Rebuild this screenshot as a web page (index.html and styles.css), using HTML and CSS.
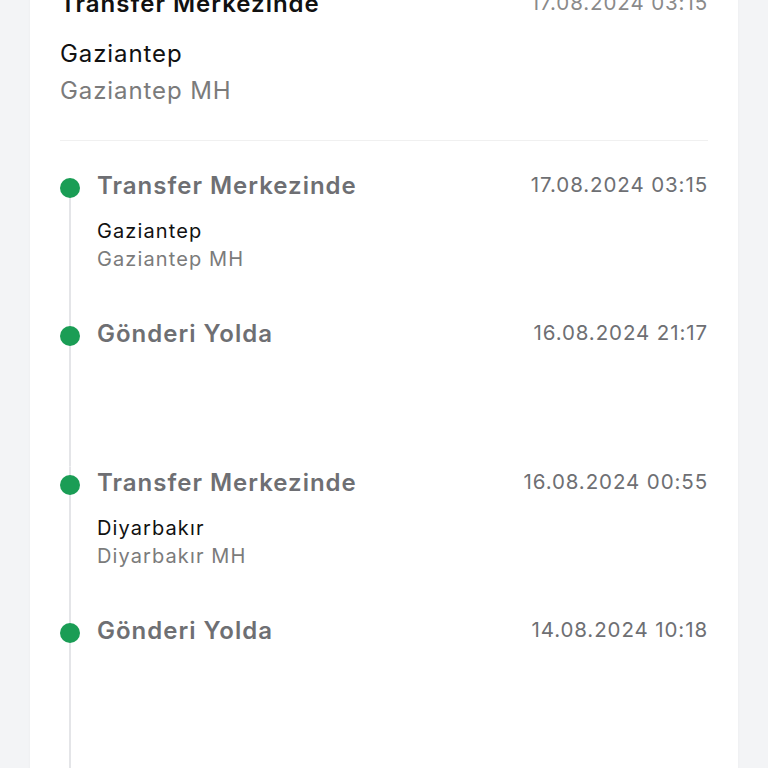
FILE: index.html
```html
<!DOCTYPE html>
<html lang="tr">
<head>
<meta charset="utf-8">
<title>Gönderi Takibi</title>
<link rel="stylesheet" href="styles.css">
</head>
<body>
<div class="page">
  <div class="card">
    <section class="current">
      <div class="current-head">
        <h2 class="current-title">Transfer Merkezinde</h2>
        <span class="current-date">17.08.2024 03:15</span>
      </div>
      <p class="current-city">Gaziantep</p>
      <p class="current-branch">Gaziantep MH</p>
    </section>
    <ol class="timeline">
      <li class="event first">
        <div class="marker"><span class="dot"></span></div>
        <div class="body">
          <div class="head">
            <h3 class="title">Transfer Merkezinde</h3>
            <span class="date">17.08.2024 03:15</span>
          </div>
          <p class="city">Gaziantep</p>
          <p class="branch">Gaziantep MH</p>
        </div>
      </li>
      <li class="event">
        <div class="marker"><span class="dot"></span></div>
        <div class="body">
          <div class="head">
            <h3 class="title">Gönderi Yolda</h3>
            <span class="date">16.08.2024 21:17</span>
          </div>
        </div>
      </li>
      <li class="event">
        <div class="marker"><span class="dot"></span></div>
        <div class="body">
          <div class="head">
            <h3 class="title">Transfer Merkezinde</h3>
            <span class="date">16.08.2024 00:55</span>
          </div>
          <p class="city">Diyarbakır</p>
          <p class="branch">Diyarbakır MH</p>
        </div>
      </li>
      <li class="event">
        <div class="marker"><span class="dot"></span></div>
        <div class="body">
          <div class="head">
            <h3 class="title">Gönderi Yolda</h3>
            <span class="date">14.08.2024 10:18</span>
          </div>
        </div>
      </li>
      <li class="event">
        <div class="marker"><span class="dot faded"></span></div>
        <div class="body faded">
          <div class="head">
            <h3 class="title">Transfer Merkezinde</h3>
            <span class="date">13.08.2024 18:40</span>
          </div>
        </div>
      </li>
    </ol>
  </div>
</div>
</body>
</html>
```

FILE: styles.css
```css
html, body {
  margin: 0;
  padding: 0;
  background: #f3f4f6;
  height: 100%;
  overflow: hidden;
}
body {
  font-family: Inter, "Noto Sans", "Liberation Sans", sans-serif;
  -webkit-font-smoothing: antialiased;
}
.page {
  padding: 0 30px;
}
.card {
  background: #ffffff;
  padding: 0 30px;
  margin-top: -12px;
  min-height: 800px;
  box-shadow: 0 0 3px rgba(0, 0, 0, 0.04);
}
h2, h3, p { margin: 0; }

.current {
  padding-bottom: 33px;
  border-bottom: 1px solid #f0f0f0;
}
.current-head {
  display: flex;
  justify-content: space-between;
  align-items: flex-start;
}
.current-title {
  font-size: 24px;
  line-height: 32px;
  font-weight: 600;
  letter-spacing: 1px;
  color: #111111;
}
.current-date {
  padding-top: 1px;
  font-size: 20.5px;
  line-height: 28px;
  letter-spacing: 0.9px;
  color: #8a8a8a;
}
.current-city {
  margin-top: 18px;
  font-size: 24px;
  line-height: 32px;
  letter-spacing: 0.9px;
  color: #111111;
}
.current-branch {
  margin-top: 5px;
  font-size: 24px;
  line-height: 32px;
  letter-spacing: 0.9px;
  color: #7b7b7b;
}

.timeline {
  list-style: none;
  margin: 0;
  padding: 29px 0 0;
}
.event {
  display: grid;
  grid-template-columns: 20px 1fr;
  column-gap: 17px;
  height: 148.3px;
}
.marker {
  background: linear-gradient(#e4e5e8, #e4e5e8) center / 2px 100% no-repeat;
  padding-top: 8px;
  position: relative;
}
.event.first .marker {
  background-position: center 18px;
}
.dot {
  display: block;
  width: 20px;
  height: 20px;
  border-radius: 50%;
  background: #1a9d55;
}
.dot.faded { opacity: 0.08; }
.head {
  display: flex;
  justify-content: space-between;
  align-items: flex-start;
}
.title {
  font-size: 24px;
  line-height: 32px;
  font-weight: 600;
  letter-spacing: 1px;
  color: #6e6f73;
}
.date {
  padding-top: 1px;
  font-size: 20.5px;
  line-height: 28px;
  letter-spacing: 0.9px;
  color: #6e6f73;
}
.city {
  margin-top: 15px;
  font-size: 20px;
  line-height: 28px;
  letter-spacing: 1.1px;
  color: #111111;
}
.branch {
  font-size: 20px;
  line-height: 28px;
  letter-spacing: 1.1px;
  color: #7b7b7b;
}
.body.faded { opacity: 0.06; }
```
